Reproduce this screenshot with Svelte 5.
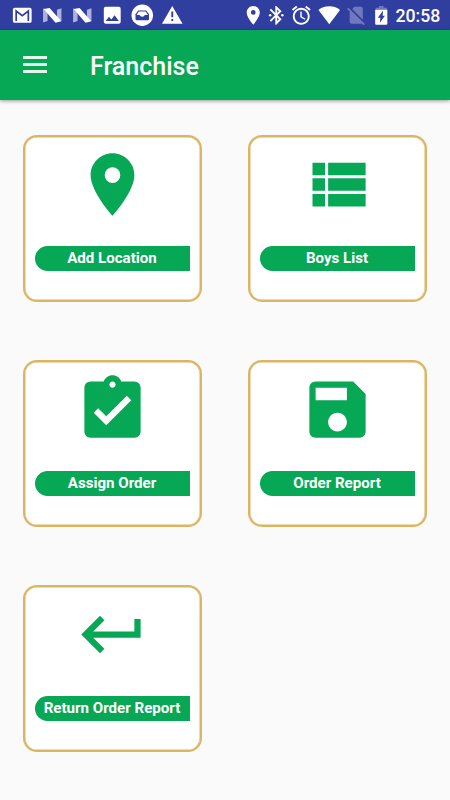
<script lang="ts">
  // Menu items shown on the franchise dashboard
  const items = [
    {
      label: 'Add Location',
      icon: 'M12 2C8.13 2 5 5.13 5 9c0 5.25 7 13 7 13s7-7.75 7-13c0-3.87-3.13-7-7-7zm0 9.5a2.5 2.5 0 0 1 0-5 2.5 2.5 0 0 1 0 5z'
    },
    {
      label: 'Boys List',
      icon: 'M4 14h4v-4H4v4zm0 5h4v-4H4v4zM4 9h4V5H4v4zm5 5h12v-4H9v4zm0 5h12v-4H9v4zM9 5v4h12V5H9z'
    },
    {
      label: 'Assign Order',
      icon: 'M19 3h-4.18C14.4 1.84 13.3 1 12 1c-1.3 0-2.4.84-2.82 2H5c-1.1 0-2 .9-2 2v14c0 1.1.9 2 2 2h14c1.1 0 2-.9 2-2V5c0-1.1-.9-2-2-2zm-7 0c.55 0 1 .45 1 1s-.45 1-1 1-1-.45-1-1 .45-1 1-1zm-2 14l-4-4 1.41-1.41L10 14.17l6.59-6.59L18 9l-8 8z'
    },
    {
      label: 'Order Report',
      icon: 'M17 3H5c-1.11 0-2 .9-2 2v14c0 1.1.89 2 2 2h14c1.1 0 2-.9 2-2V7l-4-4zm-5 16c-1.66 0-3-1.34-3-3s1.34-3 3-3 3 1.34 3 3-1.34 3-3 3zm3-10H5V5h10v4z'
    },
    {
      label: 'Return Order Report',
      icon: 'M19 7v4H5.83l3.58-3.59L8 6l-6 6 6 6 1.41-1.41L5.83 13H21V7z'
    }
  ];
</script>

<div class="screen">
  <div class="status-bar">
    <div class="notifications">
      <svg viewBox="0 0 24 24">
        <rect x="2" y="4" width="20" height="16" rx="2" />
        <path class="line" d="M5.500 18V7.500l6.500 5 6.500-5V18" />
      </svg>
      {#each [1, 2] as n (n)}
        <svg viewBox="0 0 24 24">
          <path class="faded" d="M2.200 4.800L7 6v12l-4.800 1.800zM17 6l4.800-1.500v14L17 18z" />
          <path d="M2.800 5.200L9.200 4.300 21.600 18.300 15.500 20z" />
        </svg>
      {/each}
      <svg viewBox="0 0 24 24"><path d="M21 19V5c0-1.1-.9-2-2-2H5c-1.1 0-2 .9-2 2v14c0 1.1.9 2 2 2h14c1.1 0 2-.9 2-2zM8.500 13.500l2.500 3.010L14.500 12l4.500 6H5l3.500-4.500z" /></svg>
      <svg viewBox="0 0 24 24">
        <circle cx="12" cy="12" r="11.500" />
        <path class="cut" d="M7.800 6.800h8.400l3 4.200v5q0 1.300-1.300 1.300H6.100q-1.300 0-1.300-1.300v-5z" />
        <path d="M8.400 7.900h7.200l2.500 3.800h-3.300q-.7 1.900-2.800 1.900t-2.800-1.900H5.900z" />
      </svg>
      <svg viewBox="0 0 24 24"><path d="M1 21h22L12 2 1 21zm12-3h-2v-2h2v2zm0-4h-2V8h2v6z" /></svg>
    </div>
    <div class="system">
      <svg viewBox="0 0 24 24"><path d={items[0].icon} /></svg>
      <svg class="bluetooth" viewBox="0 0 24 24"><path d="M17.710 7.710L12 2h-1v7.590L6.410 5 5 6.410 10.590 12 5 17.590 6.410 19 11 14.410V22h1l5.710-5.710-4.300-4.290 4.300-4.290zM13 5.830l1.880 1.880L13 9.590V5.830zm1.880 10.460L13 18.170v-3.760l1.880 1.880z" /><circle cx="5.500" cy="12" r="1.300" /><circle cx="18.500" cy="12" r="1.300" /></svg>
      <svg class="alarm" viewBox="0 0 24 24"><path d="M22 5.720l-4.600-3.860-1.290 1.530 4.600 3.860L22 5.720zM7.880 3.390L6.600 1.860 2 5.710l1.290 1.530 4.590-3.850zM12.500 8H11v6l4.750 2.850.75-1.230-4-2.370V8zM12 4c-4.970 0-9 4.030-9 9s4.020 9 9 9c4.970 0 9-4.030 9-9s-4.030-9-9-9zm0 16c-3.870 0-7-3.130-7-7s3.130-7 7-7 7 3.130 7 7-3.130 7-7 7z" /></svg>
      <svg class="wifi" viewBox="0 0 24 24"><path d="M12 21.500L.5 6.500C5.200 1 18.800 1 23.500 6.500z" /></svg>
      <svg class="sim" viewBox="0 0 24 24"><path class="dim" d="M19 5c0-1.100-.9-2-2-2h-7L7.660 5.340 19 16.680V5zM3.650 3.880L2.240 5.290 5 8.050V19c0 1.100.9 2 2 2h10c.36 0 .68-.1.970-.26l1.880 1.880 1.410-1.410z" /></svg>
      <svg class="battery" viewBox="0 0 24 24">
        <path class="dim" d="M9.500 2h5v2H18v2H6V4h3.500z" />
        <path d="M5.500 6v14.700q0 1.300 1.300 1.300h10.400q1.300 0 1.300-1.300V6zM10.500 20l.5-5.300H8.300L14 7l-.6 5.500h2.500z" />
      </svg>
      <span class="clock">20:58</span>
    </div>
  </div>

  <header class="toolbar">
    <button class="menu" aria-label="Menu">
      <span></span>
      <span></span>
      <span></span>
    </button>
    <h1>Franchise</h1>
  </header>

  <main class="grid">
    {#each items as item (item.label)}
      <div class="card">
        <svg class="icon" viewBox="0 0 24 24"><path d={item.icon} /></svg>
        <div class="label">{item.label}</div>
      </div>
    {/each}
  </main>
</div>

<style>
  :global(body) { margin: 0; }
  .screen {
    width: 450px;
    height: 800px;
    overflow: hidden;
    display: flex;
    flex-direction: column;
    background: #fafafa;
    font-family: Roboto, sans-serif;
  }

  .status-bar {
    box-sizing: border-box;
    height: 30px;
    padding: 0 8.5px 0 11.25px;
    display: flex;
    justify-content: space-between;
    align-items: center;
    background: #303f9f;
    color: #fff;
  }
  .status-bar svg { width: 22.5px; height: 22.5px; flex: none; fill: #fff; }
  .notifications { display: flex; gap: 7.5px; }
  .system { display: flex; align-items: center; }
  .status-bar .faded { fill: #acb2d9; }
  .status-bar .dim { fill: #6f79bc; }
  .status-bar .cut { fill: #303f9f; }
  .status-bar .line { fill: none; stroke: #303f9f; stroke-width: 1.8; }
  .bluetooth { margin-left: 0.5px; }
  .alarm { margin-left: 2px; }
  .wifi { margin-left: 6px; }
  .sim { margin-left: 4px; }
  .battery { margin-left: 3px; }
  .clock { margin-left: 3px; width: 46px; font-size: 17.7px; line-height: 22px; padding-top: 1px; font-weight: 500; white-space: nowrap; }

  .toolbar {
    position: relative;
    height: 70px;
    flex: none;
    display: flex;
    align-items: center;
    background: #06a755;
    box-shadow: 0 1px 4px rgba(0, 0, 0, 0.4);
  }
  .menu {
    width: 24px;
    margin: 0 0 1px 23px;
    padding: 0;
    display: flex;
    flex-direction: column;
    gap: 4px;
    border: 0;
    background: none;
  }
  .menu span { height: 3px; background: #e6f6ed; }
  h1 {
    margin: 4px 0 0 43px;
    color: #fff;
    font-size: 25px;
    font-weight: 500;
    line-height: 30px;
  }

  .grid {
    padding: 35px 22.5px 0;
    display: grid;
    grid-template-columns: 179.5px 179.5px;
    gap: 58px 45.5px;
  }
  .card {
    box-sizing: border-box;
    height: 167px;
    padding: 10.4px 10px 0;
    display: flex;
    flex-direction: column;
    align-items: center;
    border: 2px solid #dcb564;
    border-radius: 14px;
    background: #fff;
    box-shadow: inset 0 0 0 0.5px #dcb564;
  }
  .icon { width: 75px; height: 75px; fill: #06a755; }
  .label {
    align-self: flex-start;
    width: 155px;
    height: 25px;
    margin-top: 23.6px;
    border-radius: 12.5px 0 0 12.5px;
    background: #06a755;
    color: #fff;
    font-size: 15.1px;
    font-weight: 700;
    line-height: 24px;
    text-align: center;
    white-space: nowrap;
  }
</style>
